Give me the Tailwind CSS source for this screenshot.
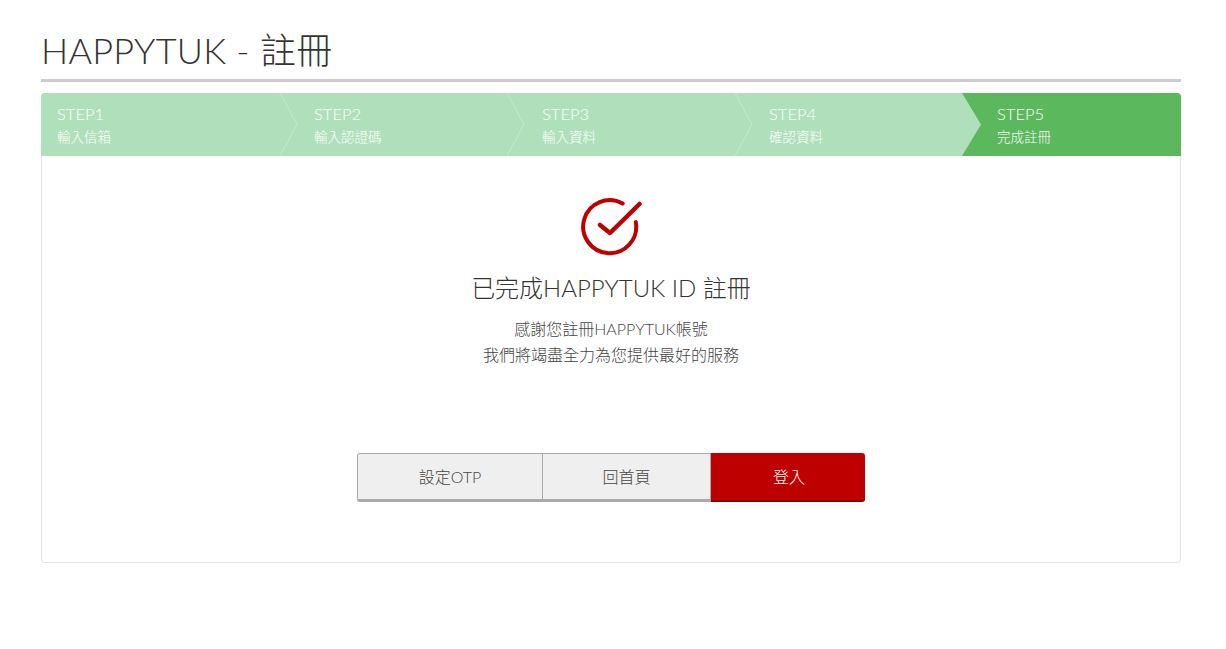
<!DOCTYPE html>
<html lang="zh-Hant">
<head>
    <meta charset="UTF-8">
    <title>HAPPYTUK - 註冊</title>
    <script src="https://cdn.jsdelivr.net/npm/@tailwindcss/browser@4"></script>
</head>
<body class="bg-white min-h-screen font-['Lato','Noto_Sans_CJK_TC',sans-serif] font-light text-[#333]">
    <div class="w-[1140px] ml-[41px]">
        <h1 class="text-[36px] leading-[44px] pt-[28px] pb-[7px] border-b-[3px] border-[#ccc] h-[82px] font-light tracking-[0.25px]">HAPPYTUK - 註冊</h1>

        <!-- steps -->
        <div class="flex h-[63px] mt-[11px] rounded-t-[4px] overflow-hidden bg-[#b0dfbc] text-white">
            <div class="relative w-[257px] pl-[16px] pt-[10px]">
                <p class="text-[16.5px] leading-[22px]">STEP1</p>
                <p class="text-[13.5px] leading-[20px] mt-[2px]">輸入信箱</p>
                <svg class="absolute right-0 top-0 z-10" width="18" height="63" viewBox="0 0 18 63"><path d="M0 0 L17 31.500 L0 63" fill="none" stroke="#c5e8ce" stroke-width="1"/></svg>
            </div>
            <div class="relative w-[227px] pl-[16px] pt-[10px]">
                <p class="text-[16.5px] leading-[22px]">STEP2</p>
                <p class="text-[13.5px] leading-[20px] mt-[2px]">輸入認證碼</p>
                <svg class="absolute right-0 top-0 z-10" width="18" height="63" viewBox="0 0 18 63"><path d="M0 0 L17 31.500 L0 63" fill="none" stroke="#c5e8ce" stroke-width="1"/></svg>
            </div>
            <div class="relative w-[228px] pl-[17px] pt-[10px]">
                <p class="text-[16.5px] leading-[22px]">STEP3</p>
                <p class="text-[13.5px] leading-[20px] mt-[2px]">輸入資料</p>
                <svg class="absolute right-0 top-0 z-10" width="18" height="63" viewBox="0 0 18 63"><path d="M0 0 L17 31.500 L0 63" fill="none" stroke="#c5e8ce" stroke-width="1"/></svg>
            </div>
            <div class="relative w-[228px] pl-[16px] pt-[10px]">
                <p class="text-[16.5px] leading-[22px]">STEP4</p>
                <p class="text-[13.5px] leading-[20px] mt-[2px]">確認資料</p>
            </div>
            <div class="relative flex-1 pl-[16px] pt-[10px] bg-[#5cb85c]">
                <svg class="absolute left-[-19px] top-0" width="19" height="63" viewBox="0 0 19 63"><path d="M0 0 H19 V63 H0 L19 31.500 Z" fill="#5cb85c"/></svg>
                <p class="text-[16.5px] leading-[22px]">STEP5</p>
                <p class="text-[13.5px] leading-[20px] mt-[2px]">完成註冊</p>
            </div>
        </div>

        <!-- result card -->
        <div class="h-[407px] border border-t-0 border-[#e3e3e3] rounded-b-[4px] flex flex-col items-center">
            <svg class="mt-[42px]" width="62" height="60" viewBox="0 0 62 60" fill="none" stroke="#bf0000" stroke-linecap="round">
                <path d="M42.700 5.600 A26.500 26.500 0 1 0 55.800 24.100" stroke-width="4"/>
                <path d="M20 27 L30 35 L59.500 6" stroke-width="4.500" stroke-linejoin="round"/>
            </svg>
            <h2 class="text-[24px] leading-[32px] mt-[14px]">已完成HAPPYTUK ID 註冊</h2>
            <p class="text-[16px] leading-[26px] mt-[12px] text-center text-[#444]">感謝您註冊HAPPYTUK帳號<br>我們將竭盡全力為您提供最好的服務</p>
            <div class="flex mt-[85px] w-[508px] h-[49px] text-[16px] text-[#444]">
                <button class="w-[186px] bg-[#efefef] border border-[#aaa] border-b-[3px] rounded-l-[3px]">設定OTP</button>
                <button class="w-[168px] bg-[#efefef] border-y border-r border-[#aaa] border-b-[3px]">回首頁</button>
                <button class="flex-1 pl-[2px] bg-[#bf0000] border-b-[2px] border-[#8f0000] text-white rounded-r-[3px]">登入</button>
            </div>
        </div>
    </div>
</body>
</html>
